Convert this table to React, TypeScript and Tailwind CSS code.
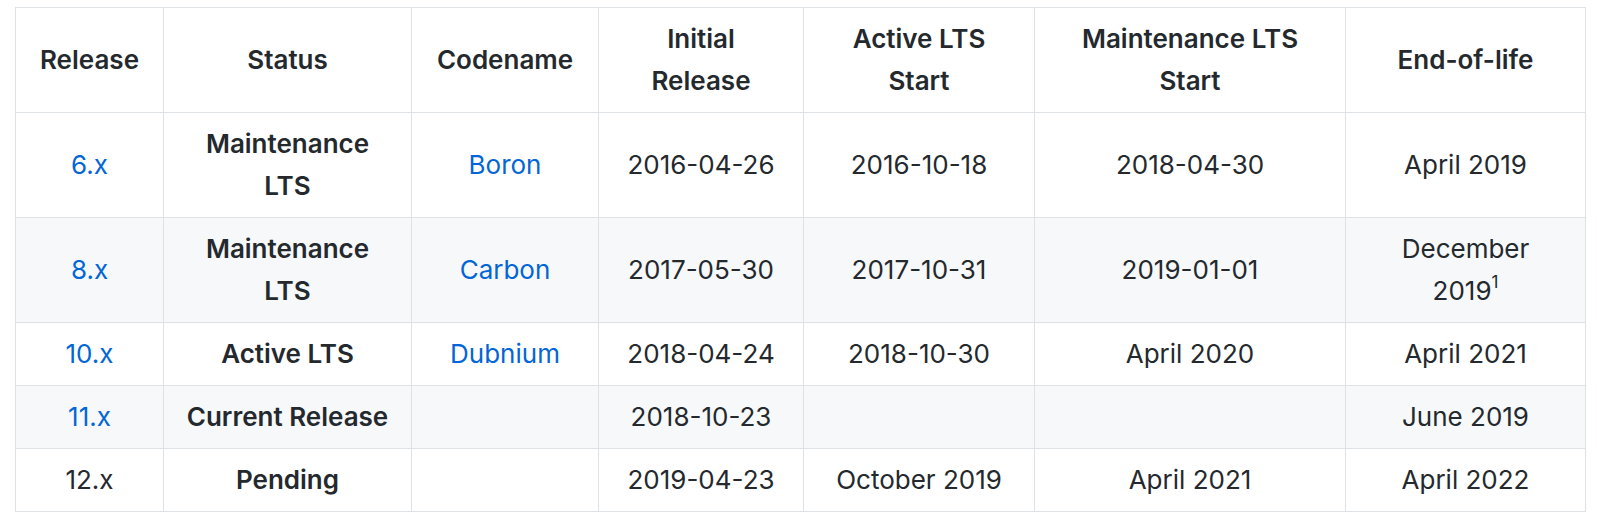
import React from 'react';

type Cell = { text: string; link?: boolean; sup?: string };
type Row = Cell[];

const headers = [
  'Release',
  'Status',
  'Codename',
  'Initial Release',
  'Active LTS Start',
  'Maintenance LTS Start',
  'End-of-life',
];

const widths = [148, 248, 187, 205, 231, 311, 240];

const rows: Row[] = [
  [
    { text: '6.x', link: true },
    { text: 'Maintenance LTS' },
    { text: 'Boron', link: true },
    { text: '2016-04-26' },
    { text: '2016-10-18' },
    { text: '2018-04-30' },
    { text: 'April 2019' },
  ],
  [
    { text: '8.x', link: true },
    { text: 'Maintenance LTS' },
    { text: 'Carbon', link: true },
    { text: '2017-05-30' },
    { text: '2017-10-31' },
    { text: '2019-01-01' },
    { text: 'December 2019', sup: '1' },
  ],
  [
    { text: '10.x', link: true },
    { text: 'Active LTS' },
    { text: 'Dubnium', link: true },
    { text: '2018-04-24' },
    { text: '2018-10-30' },
    { text: 'April 2020' },
    { text: 'April 2021' },
  ],
  [
    { text: '11.x', link: true },
    { text: 'Current Release' },
    { text: '' },
    { text: '2018-10-23' },
    { text: '' },
    { text: '' },
    { text: 'June 2019' },
  ],
  [
    { text: '12.x' },
    { text: 'Pending' },
    { text: '' },
    { text: '2019-04-23' },
    { text: 'October 2019' },
    { text: 'April 2021' },
    { text: 'April 2022' },
  ],
];

export default function App() {
  return (
    <div
      className="bg-white min-h-[524px] pt-[7px] pl-[15px] text-[#24292e] text-[26px] leading-[42px]"
      style={{ fontFamily: 'Inter, "Noto Sans", sans-serif' }}
    >
      <table className="table-fixed border-collapse w-[1570px]">
        <colgroup>
          {widths.map((w, i) => (
            <col key={i} style={{ width: w }} />
          ))}
        </colgroup>
        <thead>
          <tr className="bg-white">
            {headers.map((h) => (
              <th
                key={h}
                className="border border-[#dfe2e5] px-[21px] py-[10px] font-semibold text-center align-middle"
              >
                {h}
              </th>
            ))}
          </tr>
        </thead>
        <tbody>
          {rows.map((row, ri) => (
            <tr key={ri} className={ri % 2 === 1 ? 'bg-[#f6f8fa]' : 'bg-white'}>
              {row.map((c, ci) => (
                <td
                  key={ci}
                  className={
                    'border border-[#dfe2e5] px-[21px] py-[10px] text-center align-middle' +
                    (ci === 1 ? ' font-semibold' : '')
                  }
                >
                  {c.link ? (
                    <a className="text-[#0366d6]">{c.text}</a>
                  ) : (
                    c.text
                  )}
                  {c.sup && (
                    <sup className="text-[17px] leading-none top-[-0.7em]">{c.sup}</sup>
                  )}
                </td>
              ))}
            </tr>
          ))}
        </tbody>
      </table>
    </div>
  );
}
